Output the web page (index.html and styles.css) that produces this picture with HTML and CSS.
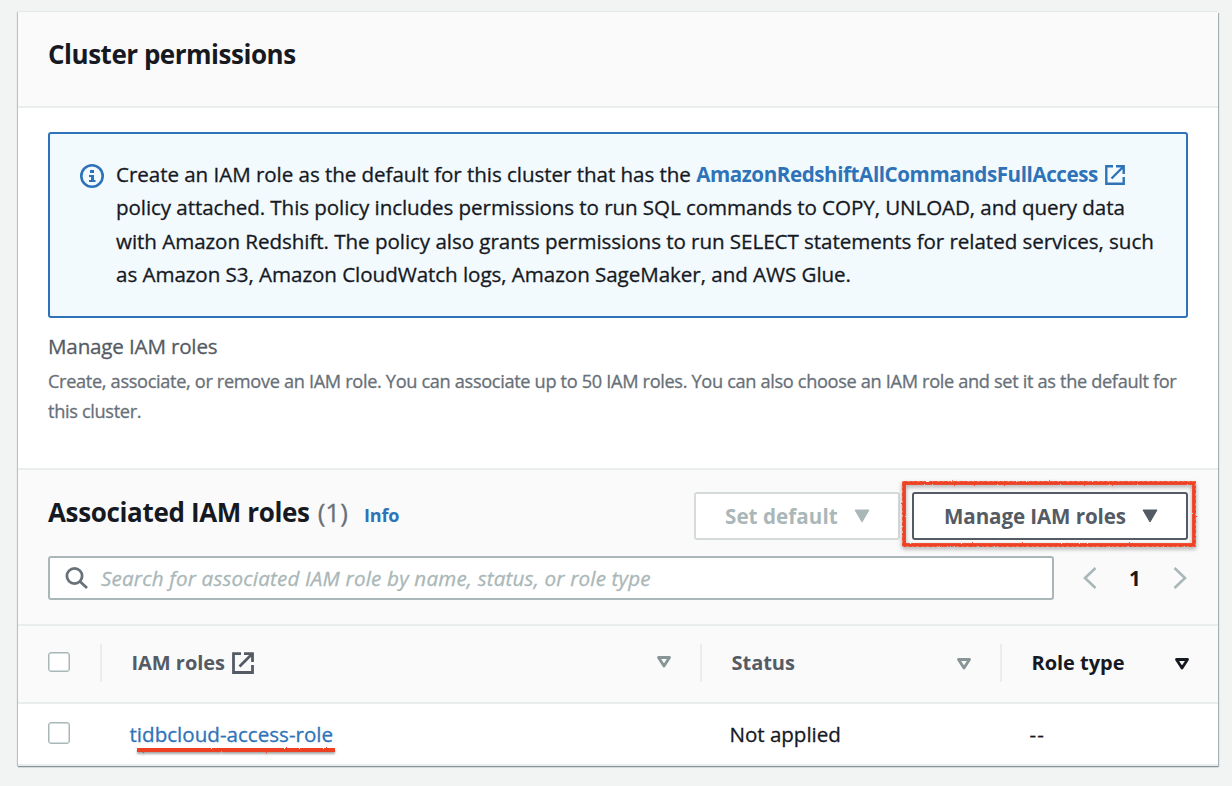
FILE: index.html
```html
<!DOCTYPE html>
<html lang="en">
<head>
<meta charset="utf-8">
<title>Cluster permissions</title>
<link rel="stylesheet" href="styles.css">
</head>
<body>
<main class="card">
  <header class="card-header"><h1 class="title t-cluster">Cluster permissions</h1></header>
  <section class="card-body">
    <div class="alert">
      <svg class="info-icon" width="24" height="24" viewBox="0 0 24 24"><circle cx="12" cy="12" r="10.7" fill="none" stroke="#2e73b8" stroke-width="2.6"/><path d="M10 6h4v3h-4zM9 11h5v5h1.500v2H9v-2h2v-3H9z" fill="#2e73b8"/></svg>
      <p class="alert-text">
        <span class="line l1">Create an IAM role as the default for this cluster that has the <a class="policy">AmazonRedshiftAllCommandsFullAccess</a><svg class="ext" width="20" height="20" viewBox="0 0 20 20" fill="none" stroke="#2e73b8" stroke-width="2.4"><path d="M8 1.300H1.300v17.400h17.400V12M11 1.300h7.700V9M18.500 1.500L6.500 13.500"/></svg></span>
        <span class="line l2">policy attached. This policy includes permissions to run SQL commands to COPY, UNLOAD, and query data</span>
        <span class="line l3">with Amazon Redshift. The policy also grants permissions to run SELECT statements for related services, such</span>
        <span class="line l4">as Amazon S3, Amazon CloudWatch logs, Amazon SageMaker, and AWS Glue.</span>
      </p>
    </div>
    <h2 class="label">Manage IAM roles</h2>
    <p class="description">
      <span class="line d1">Create, associate, or remove an IAM role. You can associate up to 50 IAM roles. You can also choose an IAM role and set it as the default for</span>
      <span class="line d1">this cluster.</span>
    </p>
  </section>
  <section class="roles-tools">
    <div class="roles-heading">
      <h1 class="title t-assoc">Associated IAM roles</h1><span class="count">(1)</span><a class="info">Info</a>
      <div class="actions">
        <button class="btn disabled"><span class="b1">Set default</span><svg width="16" height="14" viewBox="0 0 16 14"><path d="M1 1h14L8 13z" fill="#aab7b8" stroke="#aab7b8" stroke-linejoin="round"/></svg></button>
        <div class="marked">
          <button class="btn"><span class="b2">Manage IAM roles</span><svg width="16" height="14" viewBox="0 0 16 14"><path d="M1 1h14L8 13z" fill="#545b64" stroke="#545b64" stroke-linejoin="round"/></svg></button>
          <svg class="marker-box" width="300" height="72" viewBox="0 0 300 72"><defs><filter id="rough" x="-5%" y="-20%" width="110%" height="140%"><feTurbulence type="fractalNoise" baseFrequency=".6" numOctaves="2" seed="4"/><feDisplacementMap in="SourceGraphic" scale="2" xChannelSelector="R" yChannelSelector="G"/></filter></defs><g filter="url(#rough)" fill="none"><rect x="5" y="5" width="290" height="62" stroke="#ee4023" stroke-width="3.800"/><rect x="3.500" y="3.500" width="293" height="65" stroke="#ffb5a8" stroke-width=".6" stroke-dasharray="1 4 2 3"/></g></svg>
        </div>
      </div>
    </div>
    <div class="search-row">
      <div class="search"><svg width="24" height="24" viewBox="0 0 24 24" fill="none" stroke="#687078" stroke-width="2.8"><circle cx="9.500" cy="10" r="7.600"/><path d="M15 15.500l7 6.500"/></svg><span class="placeholder">Search for associated IAM role by name, status, or role type</span></div>
      <div class="pager"><svg width="14" height="24" viewBox="0 0 14 24"><path d="M12.500 2L2 12l10.500 10"/></svg><b>1</b><svg width="14" height="24" viewBox="0 0 14 24"><path d="M1.500 2L12 12 1.500 22"/></svg></div>
    </div>
  </section>
  <section class="table">
    <div class="row head">
      <div class="cell check"><i class="box box-head"></i></div>
      <div class="cell"><span class="h1c">IAM roles</span><svg class="ext-head" width="22" height="22" viewBox="0 0 22 22" fill="none" stroke="#545b64" stroke-width="2.8"><path d="M9 1.600H1.500v18.900h19V13M12 1.600h8.500V10M20 2L7.500 14.500"/></svg><svg class="sort" width="16" height="14" viewBox="0 0 16 14"><path d="M2.500 2.500h11L8 11z" stroke="#879596"/></svg></div>
      <div class="cell"><span class="h2c">Status</span><svg class="sort low" width="16" height="14" viewBox="0 0 16 14"><path d="M2.500 2.500h11L8 11z" stroke="#879596"/></svg></div>
      <div class="cell active"><span class="h3c">Role type</span><svg class="sort low last" width="16" height="14" viewBox="0 0 16 14"><path d="M2.500 2.500h11L8 11z" stroke="#16191f"/></svg></div>
    </div>
    <div class="row body">
      <div class="cell check"><i class="box"></i></div>
      <div class="cell"><a class="role">tidbcloud-access-role<svg class="marker-line" width="206" height="12" viewBox="0 0 206 12"><path d="M4 5h198" stroke="#ee4023" stroke-width="4" filter="url(#rough-line)"/><defs><filter id="rough-line" filterUnits="userSpaceOnUse" x="0" y="0" width="206" height="12"><feTurbulence type="fractalNoise" baseFrequency=".6" numOctaves="2" seed="8"/><feDisplacementMap in="SourceGraphic" scale="2" xChannelSelector="R" yChannelSelector="G"/></filter></defs></svg></a></div>
      <div class="cell"><span class="c2">Not applied</span></div>
      <div class="cell"><span class="c3">--</span></div>
    </div>
  </section>
</main>
</body>
</html>
```
FILE: styles.css
```css
* { box-sizing: border-box; }
body { margin: 0; height: 786px; overflow: hidden; padding: 12px 14px 0 18px; background: #f2f3f3; font: 400 20.6px/33.3px "Open Sans", "Noto Sans", sans-serif; color: #16191f; }
h1, h2, p { margin: 0; font-weight: 400; }
span, a, h1, h2, b { white-space: nowrap; }
.line, .label, .count, .placeholder, .body .cell { -webkit-text-stroke: .3px currentColor; }
.card { height: 754px; background: #fff; box-shadow: 0 1px 1px #879596, 1px 1px 1px #aab7b8, -1px 0 1px #c3cccc, 0 -1px 0 #eaeded; }
.card-header { height: 96px; border-bottom: 2px solid #eaeded; background: #fafafa; padding: 24px 30px; }
.title { font-size: 26px; line-height: 36px; font-weight: 700; letter-spacing: -.48px; }
.card-body { height: 360px; padding: 24px 30px 0; }
.alert { height: 186px; border: 2px solid #2e73b8; border-radius: 3px; background: #f2fafe; padding: 24px 30px; display: flex; }
.info-icon { margin-top: 6px; flex: none; }
.alert-text { margin-left: 12px; }
.line { display: block; }
.l1 { letter-spacing: -.06px; }
.l2 { letter-spacing: -.09px; }
.l3 { letter-spacing: -.06px; }
.l4 { letter-spacing: -.06px; }
.policy { font-weight: 700; color: #2e73b8; letter-spacing: -.43px; -webkit-text-stroke: 0; }
.ext { margin-left: 7px; vertical-align: -3px; }
.label { font-size: 20.6px; line-height: 30px; color: #545b64; margin-top: 13px; letter-spacing: -.17px; }
.description { font-size: 18.2px; line-height: 30px; color: #687078; margin-top: 5px; }
.d1 { letter-spacing: -.34px; }
.roles-tools { height: 156px; border-top: 2px solid #eaeded; background: #fafafa; padding: 22px 30px 0; }
.roles-heading { display: flex; height: 48px; }
.t-assoc { margin-top: 2px; letter-spacing: -.35px; }
.count { font-size: 26px; line-height: 36px; color: #687078; margin: 2px 0 0 8px; letter-spacing: 0; }
.info { font-size: 18px; font-weight: 700; color: #2e73b8; margin: 7px 0 0 16px; letter-spacing: -.15px; }
.actions { display: flex; margin-left: auto; gap: 12px; }
.btn { height: 48px; border: 2px solid #545b64; border-radius: 3px; background: #fff; font: 700 20.6px/44px "Open Sans", sans-serif; color: #545b64; padding: 0 28px 0 30px; display: flex; align-items: center; justify-content: space-between; width: 276px; }
.btn span { letter-spacing: -.1px; }
.btn.disabled { width: 206px; border-color: #d5dbdb; color: #aab7b8; padding-left: 29px; }
.b1.b1 { letter-spacing: .05px; }
.marked { position: relative; }
.marker-box { position: absolute; left: -13px; top: -14px; pointer-events: none; filter: drop-shadow(0 2px 2px rgba(0,0,0,.35)); }
.search-row { display: flex; margin-top: 16px; height: 44px; }
.search { width: 1006px; border: 2px solid #aab7b8; border-radius: 3px; background: #fff; display: flex; align-items: center; padding-left: 15px; }
.placeholder { font-style: italic; color: #aab7b8; margin: 1px 0 0 12px; letter-spacing: .19px; }
.pager { flex: 1; display: flex; align-items: center; justify-content: space-between; padding: 0 1px 0 29px; }
.pager b { margin-top: 1px; }
.pager path { fill: none; stroke: #aab7b8; stroke-width: 2.6; }
.row { display: grid; grid-template-columns: 84px 600px 300px 216px; }
.head { height: 80px; border-top: 2px solid #eaeded; border-bottom: 2px solid #eaeded; background: #fafafa; padding: 18px 0; font-size: 20px; font-weight: 700; color: #545b64; }
.cell { display: flex; align-items: center; position: relative; padding-left: 30px; }
.head .cell { height: 38px; border-left: 2px solid #eaeded; margin-left: -2px; padding-left: 29.5px; }
.head .cell span { letter-spacing: -.03px; }
.head .check { border: 0; margin: 0; padding-left: 30px; }
.head .active { color: #16191f; }
.box { width: 22px; height: 22px; margin-bottom: 4px; border: 1px solid #aab7b8; border-radius: 3px; background: #fff; box-shadow: inset 0 0 0 .5px #aab7b8; }
.box-head { height: 20px; margin-bottom: 2px; }
.body { height: 62px; border-bottom: 2px solid #eaeded; padding-top: 2px; }
.body .cell { padding-left: 27.5px; }
.body .check { padding-left: 30px; }
.sort { margin-left: auto; margin-right: 30px; margin-bottom: 2px; }
.sort.last { margin-right: 28px; }
.sort path { fill: none; stroke-width: 2.8; stroke-linejoin: round; }
.low { position: relative; top: 2px; }
.ext-head { margin-left: 7px; }
.role { color: #2e73b8; position: relative; letter-spacing: 0; }
.c2 { letter-spacing: -.05px; }
.c3 { letter-spacing: 1px; }
.marker-line { position: absolute; left: 3.500px; top: 27px; filter: drop-shadow(0 2px 1px rgba(0,0,0,.35)); }
```
